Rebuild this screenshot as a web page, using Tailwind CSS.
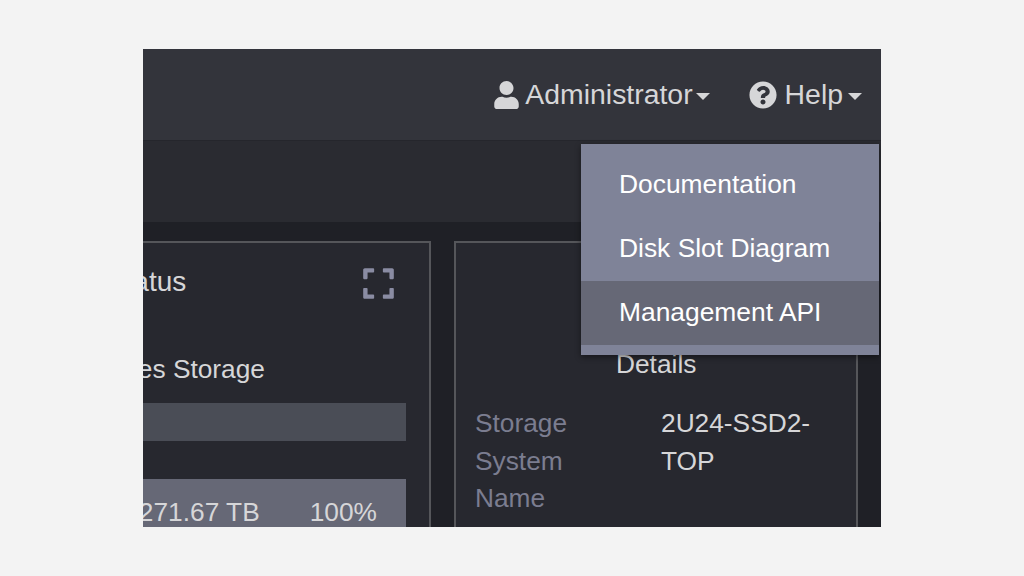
<!DOCTYPE html>
<html lang="en">
<head>
    <meta charset="UTF-8">
    <meta name="viewport" content="width=device-width, initial-scale=1.0">
    <title>Storage Dashboard</title>
    <script src="https://cdn.jsdelivr.net/npm/@tailwindcss/browser@4"></script>
</head>
<body class="bg-[#f3f3f3] h-[576px] overflow-hidden font-['Liberation_Sans',sans-serif]">
    <div class="relative mt-[49px] ml-[143px] w-[738px] h-[478px] overflow-hidden bg-[#1f2026] text-[26.3px] leading-[37.5px] text-[#d6d6d8]">
        <!-- top nav -->
        <header class="h-[92px] bg-[#33343b] border-b border-[#25262c] flex items-center justify-end pr-[19px]">
            <div class="flex items-center mr-[39px]">
                <svg class="w-[25px] h-[28px] mr-[6px] fill-[#d6d6d8]" viewBox="0 0 448 512"><path d="M224 256c70.7 0 128-57.3 128-128S294.7 0 224 0 96 57.3 96 128s57.3 128 128 128zm89.6 32h-16.7c-22.2 10.2-46.9 16-72.9 16s-50.6-5.8-72.9-16h-16.7C60.2 288 0 348.2 0 422.4V464c0 26.5 21.5 48 48 48h352c26.5 0 48-21.5 48-48v-41.6c0-74.2-60.2-134.4-134.4-134.4z"/></svg>
                <span class="text-[28.4px]">Administrator</span>
                <span class="ml-[3px] mt-[3px] border-x-[7px] border-x-transparent border-t-[7px] border-t-[#d6d6d8]"></span>
            </div>
            <div class="flex items-center">
                <svg class="w-[28px] h-[28px] mr-[8px] fill-[#d6d6d8]" viewBox="0 0 512 512"><path d="M504 256c0 136.997-111.043 248-248 248S8 392.997 8 256C8 119.083 119.043 8 256 8s248 111.083 248 248zM262.655 90c-54.497 0-89.255 22.957-116.549 63.758-3.536 5.286-2.353 12.415 2.715 16.258l34.699 26.31c5.205 3.947 12.621 3.008 16.665-2.122 17.864-22.658 30.113-35.797 57.303-35.797 20.429 0 45.698 13.148 45.698 32.958 0 14.976-12.363 22.667-32.534 33.976C247.128 238.528 216 254.941 216 296v4c0 6.627 5.373 12 12 12h56c6.627 0 12-5.373 12-12v-1.333c0-28.462 83.186-29.647 83.186-106.667 0-58.002-60.165-102-116.531-102zM256 338c-25.365 0-46 20.635-46 46 0 25.364 20.635 46 46 46s46-20.636 46-46c0-25.365-20.635-46-46-46z"/></svg>
                <span class="text-[28.4px]">Help</span>
                <span class="ml-[5px] mt-[3px] border-x-[7px] border-x-transparent border-t-[7px] border-t-[#d6d6d8]"></span>
            </div>
        </header>

        <!-- page title bar -->
        <div class="h-[81px] bg-[#2a2b31]"></div>

        <!-- cards -->
        <main class="flex gap-[23px] pt-[19px] ml-[-116px]">
            <section class="w-[404px] h-[300px] shrink-0 bg-[#27282f] border-2 border-[#55565a] pl-[19px] pr-[23px]">
                <div class="flex justify-between pt-[20px] h-[86px]">
                    <span class="w-[85px] ml-[-47px] whitespace-nowrap text-[#d6d6d8] text-[28px]">Storage Status</span>
                    <svg class="w-[31px] h-[35px] mt-[3px] mr-[12px] fill-[#8a8ca3]" viewBox="0 0 448 512"><path d="M0 180V56c0-13.3 10.7-24 24-24h124c6.6 0 12 5.4 12 12v40c0 6.6-5.4 12-12 12H64v84c0 6.6-5.4 12-12 12H12c-6.6 0-12-5.4-12-12zM288 44v40c0 6.6 5.4 12 12 12h84v84c0 6.6 5.4 12 12 12h40c6.6 0 12-5.4 12-12V56c0-13.3-10.7-24-24-24H300c-6.6 0-12 5.4-12 12zm148 276h-40c-6.6 0-12 5.4-12 12v84h-84c-6.6 0-12 5.4-12 12v40c0 6.6 5.4 12 12 12h124c13.3 0 24-10.7 24-24V332c0-6.6-5.4-12-12-12zM160 468v-40c0-6.6-5.4-12-12-12H64v-84c0-6.6-5.4-12-12-12H12c-6.6 0-12 5.4-12 12v124c0 13.3 10.7 24 24 24h124c6.6 0 12-5.4 12-12z"/></svg>
                </div>
                <div class="h-[74px] pt-[22px] text-right pr-[141px] whitespace-nowrap">Devices Storage</div>
                <div class="h-[38px] bg-[#4a4d56]"></div>
                <div class="mt-[38px] h-[60px] bg-[#666876] flex justify-end gap-[50px] pr-[29px] pt-[15px]">
                    <span>271.67 TB</span>
                    <span>100%</span>
                </div>
            </section>

            <section class="w-[404px] h-[300px] shrink-0 bg-[#27282f] border-2 border-[#55565a] pl-[19px] pr-[18px]">
                <div class="pt-[103px] pl-[141px] h-[162px]">Details</div>
                <dl class="grid grid-cols-[186px_1fr]">
                    <dt class="text-[#7b7d90] w-[110px]">Storage System Name</dt>
                    <dd>2U24-SSD2-TOP</dd>
                </dl>
            </section>
        </main>

        <!-- help dropdown -->
        <nav class="absolute left-[438px] top-[95px] w-[298px] h-[211px] bg-[#7f8398] pt-[9px] shadow-[0_2px_6px_rgba(0,0,0,0.45)] text-white text-[26.4px]">
            <a href="#" class="block h-[64px] pl-[38px] py-[13px]">Documentation</a>
            <a href="#" class="block h-[64px] pl-[38px] py-[13px]">Disk Slot Diagram</a>
            <a href="#" class="block h-[64px] pl-[38px] py-[13px] bg-[#666876]">Management API</a>
        </nav>
    </div>
</body>
</html>
